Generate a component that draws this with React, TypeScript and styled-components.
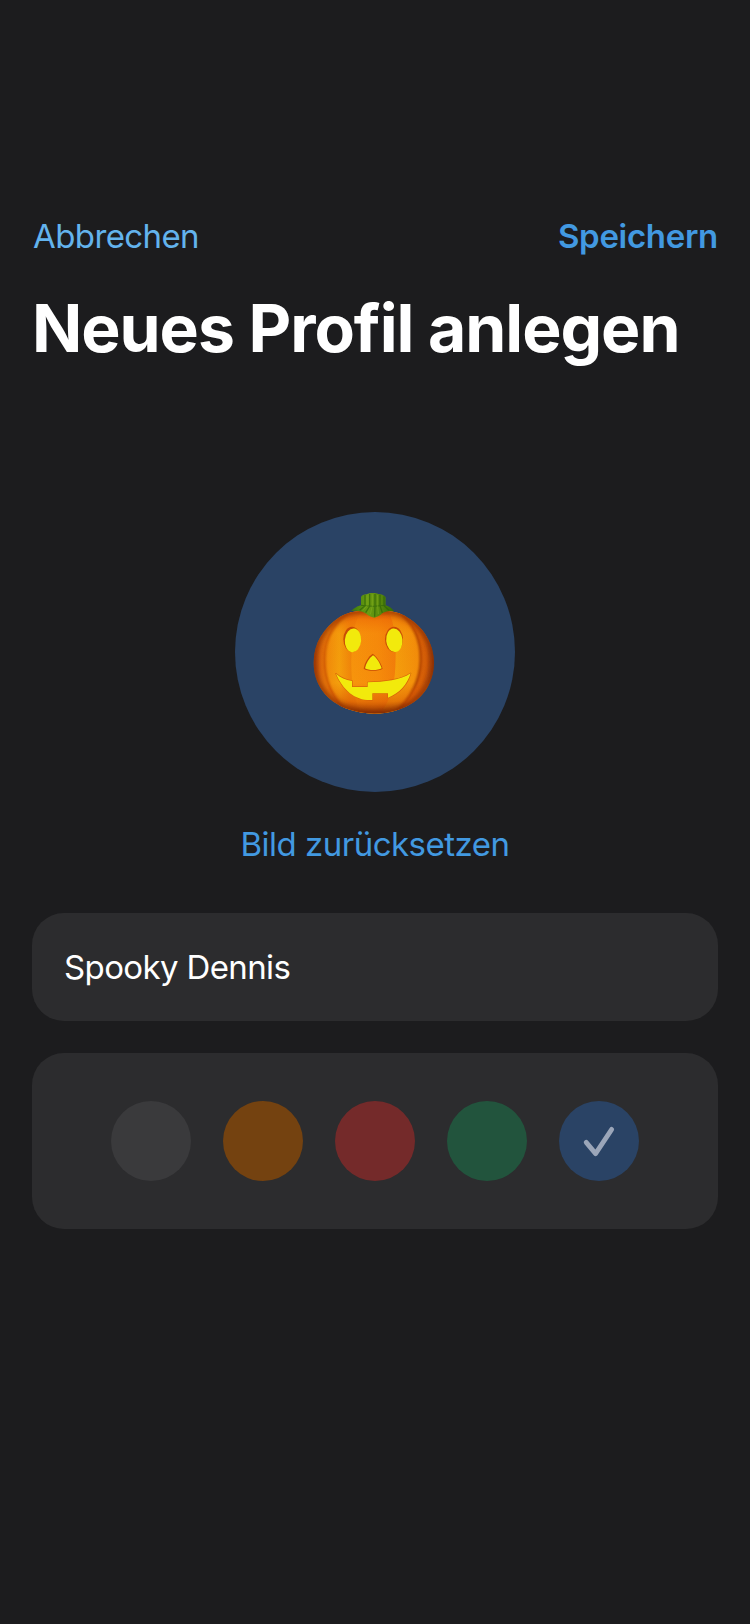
import React from "react";
import styled, { createGlobalStyle } from "styled-components";

const GlobalStyle = createGlobalStyle`
  * { box-sizing: border-box; }
  body {
    margin: 0;
    background: #1c1c1e;
    color: #fff;
    font-family: Inter, "Liberation Sans", sans-serif;
    -webkit-font-smoothing: antialiased;
  }
  button, input { font: inherit; color: inherit; border: 0; padding: 0; margin: 0; background: none; }
`;

const Screen = styled.main`
  width: 750px;
  height: 1624px;
  padding: 216px 32px 0;
  display: flex;
  flex-direction: column;
  background: #1c1c1e;
`;

const NavBar = styled.nav`
  display: flex;
  justify-content: space-between;
  height: 40px;
  padding-left: 1px;
`;

const TextButton = styled.button<{ $color?: string; $strong?: boolean; $spacing?: string }>`
  && {
    color: ${(p) => p.$color ?? "#4299e1"};
    font-size: 33px;
    font-weight: ${(p) => (p.$strong ? 600 : 400)};
    line-height: 40px;
    letter-spacing: ${(p) => p.$spacing ?? "-0.6px"};
    white-space: nowrap;
  }
`;

const Title = styled.h1`
  margin: 32px 0 0;
  font-size: 66px;
  font-weight: 700;
  line-height: 80px;
  letter-spacing: -1.03px;
  white-space: nowrap;
`;

const AvatarSection = styled.section`
  margin-top: 144px;
  display: flex;
  flex-direction: column;
  align-items: center;
  gap: 32px;
`;

const Avatar = styled.div`
  width: 280px;
  height: 280px;
  border-radius: 50%;
  background: #2a4365;
  display: flex;
  align-items: center;
  justify-content: center;
`;

const Card = styled.section`
  border-radius: 32px;
  background: #2c2c2e;
  display: flex;
  align-items: center;
`;

const NameCard = styled(Card)`
  margin-top: 49px;
  height: 108px;
  padding: 0 32px;
`;

const NameInput = styled.input`
  && {
    width: 100%;
    height: 44px;
    font-size: 33px;
    letter-spacing: -0.62px;
    outline: none;
  }
`;

const ColorCard = styled(Card)`
  margin-top: 32px;
  height: 176px;
  justify-content: center;
  gap: 32px;
`;

const Swatch = styled.button<{ $color: string }>`
  && {
    width: 80px;
    height: 80px;
    border-radius: 50%;
    background: ${(p) => p.$color};
  }
`;

const Check = styled.svg`
  display: block;
  width: 80px;
  height: 80px;
`;

const colors = ["#3a3a3c", "#744210", "#742a2a", "#22543d", "#2a4365"];
const selected = "#2a4365";

function CheckMark() {
  return (
    <Check viewBox="0 0 80 80" fill="none" stroke="#9ba6b9" strokeWidth="4.8" strokeLinecap="round" strokeLinejoin="round">
      <path d="M27.2 41.4 36.6 52.6 52.7 28.4" />
    </Check>
  );
}

const BODY =
  "M222 96C250 91 291 91 323 113C371 140 402 193 402 247C402 317 359 370 295 389C247 406 190 404 145 388C78 363 41 313 41 248C41 190 70 144 119 111C151 91 193 90 222 96Z";
const MOUTH =
  "M108 281C122 293 136 299 156 303V321H203V307C255 306 301 301 332 280C322 313 298 340 264 353V340H217V360C168 363 130 333 108 281Z";

function Pumpkin() {
  return (
    <svg width="150" height="150" viewBox="0 -9 450 450" role="img" aria-label="Kürbis">
      <defs>
        <linearGradient id="skin" x1="0" y1="0" x2="1" y2="0">
          <stop offset="0" stopColor="#b8480a" />
          <stop offset=".06" stopColor="#dd6a0a" />
          <stop offset=".12" stopColor="#e87a0a" />
          <stop offset=".88" stopColor="#d96207" />
          <stop offset=".94" stopColor="#d05c08" />
          <stop offset="1" stopColor="#9c3a08" />
        </linearGradient>
        <linearGradient id="shade" x1="0" y1="0" x2="0" y2="1">
          <stop offset="0" stopColor="#e65a05" stopOpacity=".75" />
          <stop offset=".22" stopColor="#ef6c04" stopOpacity=".1" />
          <stop offset=".7" stopColor="#df5304" stopOpacity="0" />
          <stop offset=".88" stopColor="#d45003" stopOpacity=".5" />
          <stop offset="1" stopColor="#7a2000" stopOpacity=".85" />
        </linearGradient>
        <linearGradient id="ribs" x1="0" y1="0" x2="1" y2="0">
          <stop offset="0" stopColor="#f0880a" />
          <stop offset=".15" stopColor="#f4a00c" />
          <stop offset=".27" stopColor="#f0860a" />
          <stop offset=".73" stopColor="#f5a00c" />
          <stop offset="1" stopColor="#f28c0a" />
        </linearGradient>
        <linearGradient id="centerRib" x1="0" y1="0" x2="1" y2="0">
          <stop offset="0" stopColor="#f7950c" />
          <stop offset=".6" stopColor="#f68c0b" />
          <stop offset="1" stopColor="#f27e0a" />
        </linearGradient>
        <linearGradient id="stem" x1="0" y1="0" x2="1" y2="0">
          <stop offset="0" stopColor="#3a7a0b" />
          <stop offset=".4" stopColor="#6b9c12" />
          <stop offset=".7" stopColor="#55860b" />
          <stop offset="1" stopColor="#2f6908" />
        </linearGradient>
        <clipPath id="bodyClip"><path d={BODY} /></clipPath>
        <filter id="soft" x="-20%" y="-20%" width="140%" height="140%"><feGaussianBlur stdDeviation="2.5" /></filter>
        <filter id="softer" x="-20%" y="-20%" width="140%" height="140%"><feGaussianBlur stdDeviation="8" /></filter>
      </defs>
      <path d={BODY} fill="url(#skin)" />
      <g clipPath="url(#bodyClip)">
        <path d="M324 107C384 160 404 221 385 285C373 332 344 361 305 392" fill="none" stroke="#b04a08" strokeWidth="12" filter="url(#soft)" opacity=".5" />
        <path d="M157 92C90 137 69 190 76 262C81 320 111 369 151 402H283C329 358 360 306 362 242C364 184 342 131 291 91Z" fill="url(#ribs)" />
        <path d="M187 91C160 125 156 177 154 240C153 308 162 354 184 402H241C269 361 284 319 286 260C289 198 287 132 263 91Z" fill="url(#centerRib)" />
        <g fill="none" filter="url(#soft)">
          <path d="M157 92C90 137 69 190 75 262C80 320 110 369 151 399" stroke="#c95205" strokeWidth="5" />
          <path d="M291 91C342 131 364 184 362 242C360 306 329 358 283 400" stroke="#ad4205" strokeWidth="7" />
        </g>
        <path d={BODY} fill="url(#shade)" />
        <path d={BODY} fill="none" stroke="#7a2504" strokeWidth="18" filter="url(#softer)" opacity=".65" />
      </g>
      <path d="M153 93C166 82 174 78 183 76V51C185 46 192 43 199 43C210 38 226 38 235 42C246 42 253 46 257 52V76C268 80 276 85 283 94C266 91 252 94 242 104C235 109 230 110 224 113C216 111 207 109 200 102C186 92 170 91 153 93Z" fill="url(#stem)" />
      <g fill="none" stroke="#2f6408" strokeWidth="4" opacity=".7">
        <path d="M195 45V77L179 91M209 42V78L197 98M225 42V78L224 110M240 44V77L247 98M252 49V77L267 91" />
        <path d="M183 76Q219 82 257 76" strokeWidth="3" />
      </g>
      <g fill="none" stroke="#7fae1e" strokeWidth="3" opacity=".6">
        <path d="M201 46V77L188 92M217 43V78L211 103M233 45V77L235 102" />
      </g>
      <g fill="#c94d05">
        <ellipse cx="156" cy="178" rx="26" ry="38" />
        <ellipse cx="282" cy="178" rx="27" ry="38" />
        <path d="M218 221C206 229 194 247 191 266C201 274 236 274 248 266C242 246 229 228 218 221Z" />
      </g>
      <path d={MOUTH} fill="none" stroke="#d9660a" strokeWidth="4" strokeLinejoin="round" />
      <g fill="#f2ea0c">
        <ellipse cx="159" cy="181" rx="24.5" ry="35.5" transform="rotate(5 158 181)" />
        <ellipse cx="283" cy="181" rx="24.5" ry="35.5" transform="rotate(-5 282 181)" />
        <path d="M219 226C207 235 198 249 195 265C205 272 234 272 245 265C239 248 230 233 219 226Z" />
        <path d={MOUTH} />
      </g>
    </svg>
  );
}

export default function App() {
  return (
    <>
      <GlobalStyle />
      <Screen>
        <NavBar>
          <TextButton $color="#63b3ed">Abbrechen</TextButton>
          <TextButton $strong $spacing="-0.3px">Speichern</TextButton>
        </NavBar>
        <Title>Neues Profil anlegen</Title>
        <AvatarSection>
          <Avatar><Pumpkin /></Avatar>
          <TextButton $spacing="-0.5px">Bild zurücksetzen</TextButton>
        </AvatarSection>
        <NameCard>
          <NameInput defaultValue="Spooky Dennis" aria-label="Name" />
        </NameCard>
        <ColorCard>
          {colors.map((color) => (
            <Swatch key={color} $color={color} aria-pressed={color === selected}>
              {color === selected && <CheckMark />}
            </Swatch>
          ))}
        </ColorCard>
      </Screen>
    </>
  );
}
